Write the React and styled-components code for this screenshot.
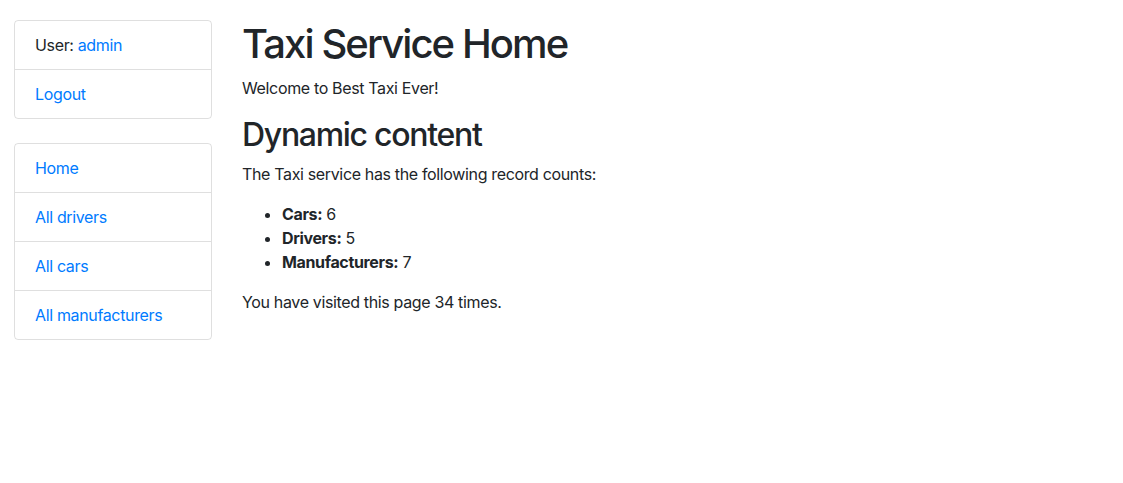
import React from 'react';
import styled, { createGlobalStyle } from 'styled-components';

const GlobalStyle = createGlobalStyle`
  * { box-sizing: border-box; }
  body {
    margin: 0;
    background: #fff;
    color: #212529;
    font-family: Inter, "Noto Sans", "Liberation Sans", sans-serif;
    font-size: 16px;
    line-height: 1.5;
    letter-spacing: -0.35px;
  }
`;

const Page = styled.div`
  display: grid;
  grid-template-columns: 198px 1fr;
  column-gap: 30px;
  align-items: start;
  padding: 20px 14px;
`;

const Sidebar = styled.nav`
  display: flex;
  flex-direction: column;
  gap: 24px;
`;

const ListGroup = styled.ul`
  list-style: none;
  margin: 0;
  padding: 0;
  display: flex;
  flex-direction: column;
  border: 1px solid rgba(0, 0, 0, 0.125);
  border-radius: 4px;
`;

const ListItem = styled.li`
  padding: 12px 20px;
  line-height: 24px;
  & + & {
    border-top: 1px solid rgba(0, 0, 0, 0.125);
  }
`;

const Link = styled.a`
  color: #007bff;
  text-decoration: none;
`;

const Main = styled.main`
  display: flex;
  flex-direction: column;
`;

const Title = styled.h1`
  margin: 0 0 8px;
  font-size: ${(p) => (p.$small ? '32px' : '40px')};
  font-weight: 500;
  line-height: 1.2;
  letter-spacing: ${(p) => (p.$small ? '-1.3px' : '-1.9px')};
`;

const Text = styled.p`
  margin: 0 0 16px;
`;

const Counts = styled.ul`
  margin: 0 0 16px;
  padding-left: 40px;
`;

const sideLinks = ['Home', 'All drivers', 'All cars', 'All manufacturers'];
const counts = [
  ['Cars', 6],
  ['Drivers', 5],
  ['Manufacturers', 7],
];

export default function App() {
  return (
    <>
      <GlobalStyle />
      <Page>
        <Sidebar>
          <ListGroup>
            <ListItem>
              User: <Link href="#">admin</Link>
            </ListItem>
            <ListItem>
              <Link href="#">Logout</Link>
            </ListItem>
          </ListGroup>
          <ListGroup>
            {sideLinks.map((l) => (
              <ListItem key={l}>
                <Link href="#">{l}</Link>
              </ListItem>
            ))}
          </ListGroup>
        </Sidebar>
        <Main>
          <Title>Taxi Service Home</Title>
          <Text>Welcome to Best Taxi Ever!</Text>
          <Title as="h2" $small>Dynamic content</Title>
          <Text>The Taxi service has the following record counts:</Text>
          <Counts>
            {counts.map(([name, n]) => (
              <li key={name}>
                <b>{name}:</b> {n}
              </li>
            ))}
          </Counts>
          <Text>You have visited this page 34 times.</Text>
        </Main>
      </Page>
    </>
  );
}
